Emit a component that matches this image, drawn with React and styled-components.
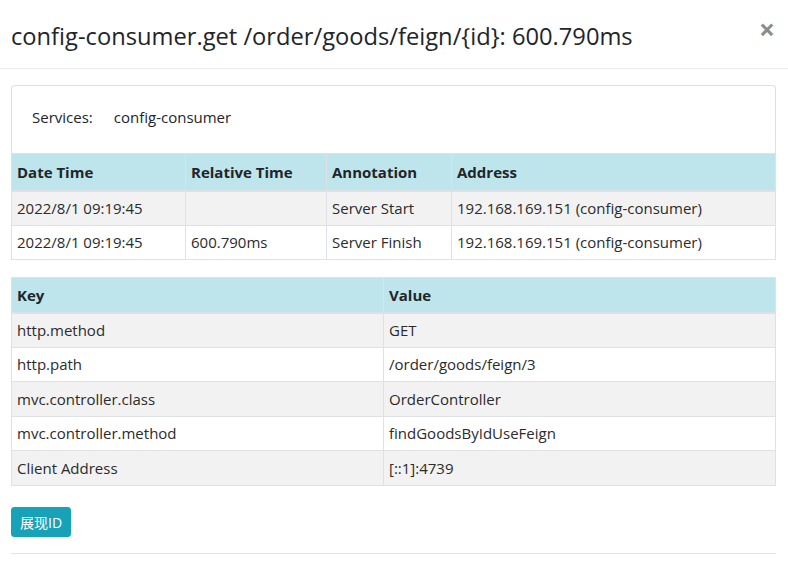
import React from "react";
import styled, { createGlobalStyle } from "styled-components";

const Global = createGlobalStyle`
  html, body { margin: 0; padding: 0; background: #fff; }
  body {
    font-family: "Open Sans", "Noto Sans CJK SC", sans-serif;
    color: #212529;
    font-size: 15px;
  }
  * { box-sizing: border-box; }
`;

const Modal = styled.div`
  width: 788px;
  background: #fff;
`;

const Header = styled.div`
  display: flex;
  align-items: flex-start;
  justify-content: space-between;
  padding: 22px 11px 17px 11px;
  border-bottom: 1px solid #e9ecef;
`;

const Title = styled.h4`
  margin: 0;
  font-size: 23.7px;
  font-weight: 400;
  line-height: 29px;
  color: #212529;
`;

const Close = styled.button`
  border: 0;
  background: transparent;
  padding: 0;
  margin: -7px 2px 0 0;
  font-family: "Open Sans", sans-serif;
  font-size: 28px;
  font-weight: 700;
  line-height: 29px;
  color: #000;
  opacity: 0.45;
  cursor: pointer;
`;

const Body = styled.div`
  padding: 16px 12px 0 11px;
`;

const Card = styled.div`
  border: 1px solid #dfdfdf;
  border-radius: 4px 4px 0 0;
  border-bottom: 0;
  padding: 19px 20px 24px;
  display: flex;
  gap: 21px;
  line-height: 24px;
  font-size: 15px;
`;

const Label = styled.span``;

const Table = styled.table`
  width: 100%;
  border-collapse: collapse;
  border: 1px solid #dee2e6;
  margin-bottom: ${(p) => p.$mb || 0}px;
  table-layout: fixed;
`;

const Th = styled.th`
  background: #bee5eb;
  text-align: left;
  font-weight: 700;
  font-size: 15px;
  padding: 0 5px;
  height: ${(p) => p.$h || 37}px;
  border: 1px solid #dee2e6;
  border-bottom: 2px solid #dee2e6;
  border-top: 0;
  width: ${(p) => p.$w || "auto"};
`;

const Tr = styled.tr`
  background: ${(p) => (p.$striped ? "#f2f2f2" : "#fff")};
`;

const Td = styled.td`
  padding: 0 5px;
  height: 34.5px;
  line-height: 20px;
  font-size: 15px;
  border: 1px solid #dee2e6;
  white-space: nowrap;
  color: #2b2b2b;
`;

const Button = styled.button`
  margin-top: 21px;
  height: 30px;
  padding: 0 8px;
  background: #17a2b8;
  color: #fff;
  border: 1px solid #17a2b8;
  border-radius: 3px;
  font-family: "Open Sans", "Noto Sans CJK SC", sans-serif;
  font-size: 14px;
  cursor: pointer;
`;

const Rule = styled.hr`
  margin: 16px 0 0;
  border: 0;
  border-top: 1px solid #e5e5e5;
`;

const annotations = [
  ["2022/8/1 09:19:45", "", "Server Start", "192.168.169.151 (config-consumer)"],
  ["2022/8/1 09:19:45", "600.790ms", "Server Finish", "192.168.169.151 (config-consumer)"],
];

const tags = [
  ["http.method", "GET"],
  ["http.path", "/order/goods/feign/3"],
  ["mvc.controller.class", "OrderController"],
  ["mvc.controller.method", "findGoodsByIdUseFeign"],
  ["Client Address", "[::1]:4739"],
];

export default function App() {
  return (
    <Modal>
      <Global />
      <Header>
        <Title>config-consumer.get /order/goods/feign/{"{id}"}: 600.790ms</Title>
        <Close aria-label="Close">×</Close>
      </Header>
      <Body>
        <Card>
          <Label>Services:</Label>
          <span>config-consumer</span>
        </Card>
        <Table $mb={17}>
          <thead>
            <tr>
              <Th $w="174px">Date Time</Th>
              <Th $w="141px">Relative Time</Th>
              <Th $w="125px">Annotation</Th>
              <Th>Address</Th>
            </tr>
          </thead>
          <tbody>
            {annotations.map((r, i) => (
              <Tr key={i} $striped={i % 2 === 0}>
                {r.map((c, j) => (
                  <Td key={j}>{c}</Td>
                ))}
              </Tr>
            ))}
          </tbody>
        </Table>
        <Table>
          <thead>
            <tr>
              <Th $w="372px" $h={35}>Key</Th>
              <Th $h={35}>Value</Th>
            </tr>
          </thead>
          <tbody>
            {tags.map((r, i) => (
              <Tr key={i} $striped={i % 2 === 0}>
                <Td>{r[0]}</Td>
                <Td>{r[1]}</Td>
              </Tr>
            ))}
          </tbody>
        </Table>
        <Button>展现ID</Button>
        <Rule />
      </Body>
    </Modal>
  );
}
